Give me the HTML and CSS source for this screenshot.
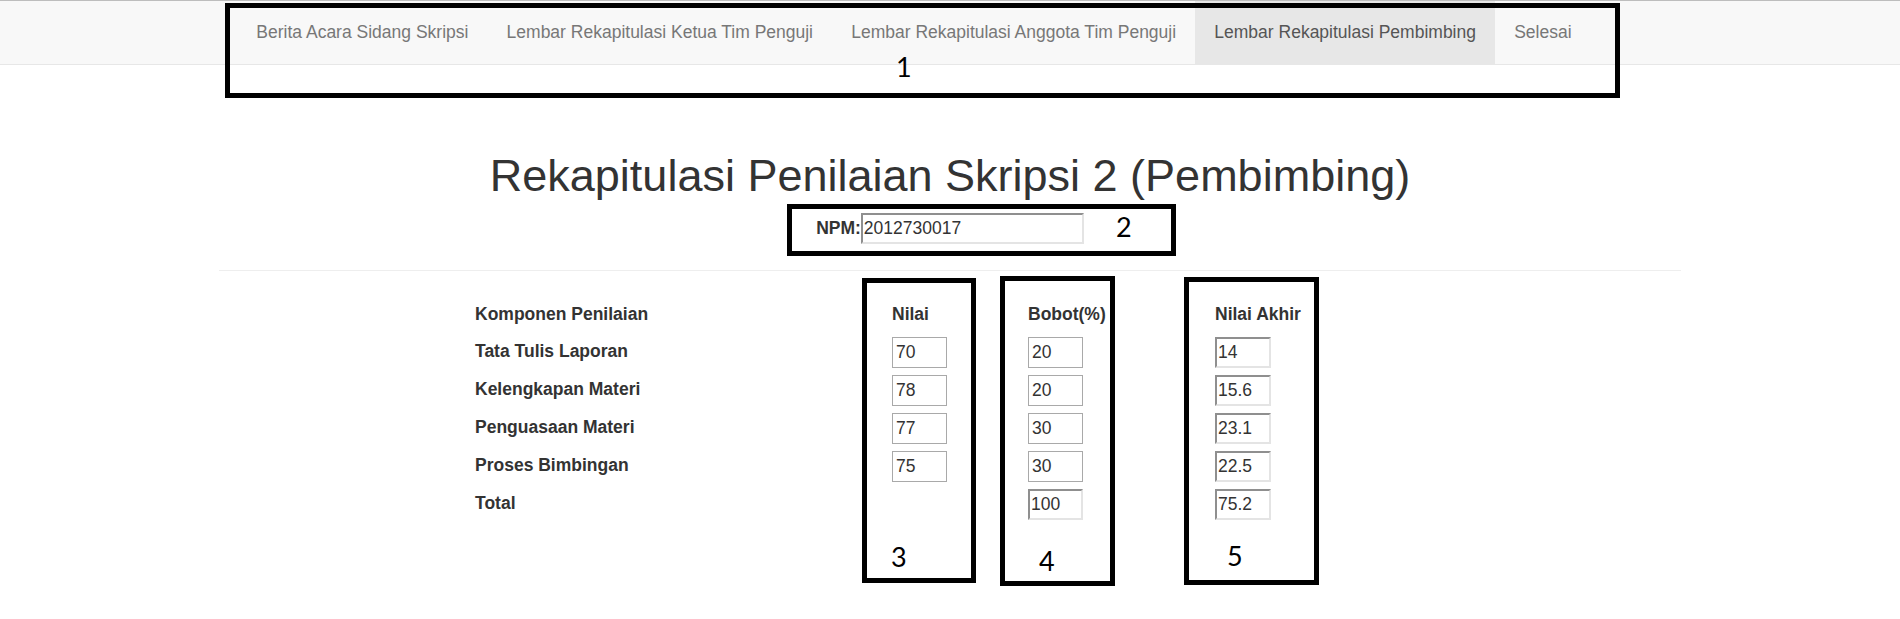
FILE: index.html
```html
<!DOCTYPE html>
<html lang="id">
<head>
<meta charset="utf-8">
<title>Rekapitulasi Penilaian Skripsi 2 (Pembimbing)</title>
<link rel="stylesheet" href="styles.css">
</head>
<body>
<nav class="navbar">
  <ul class="nav">
    <li><a href="#">Berita Acara Sidang Skripsi</a></li>
    <li><a href="#">Lembar Rekapitulasi Ketua Tim Penguji</a></li>
    <li><a href="#">Lembar Rekapitulasi Anggota Tim Penguji</a></li>
    <li class="active"><a href="#">Lembar Rekapitulasi Pembimbing</a></li>
    <li><a href="#">Selesai</a></li>
  </ul>
</nav>

<main class="content">
  <h1 class="title">Rekapitulasi Penilaian Skripsi 2 (Pembimbing)</h1>
  <div class="npm-row">
    <label class="npm-label" for="npm">NPM:</label><input id="npm" class="field field-inset field-npm" type="text" value="2012730017">
  </div>
  <hr class="divider">

  <div class="score-table">
    <div class="cell head">Komponen Penilaian</div>
    <div class="cell head">Nilai</div>
    <div class="cell head">Bobot(%)</div>
    <div class="cell head">Nilai Akhir</div>

    <div class="cell label">Tata Tulis Laporan</div>
    <div class="cell"><input class="field field-plain" type="text" value="70"></div>
    <div class="cell"><input class="field field-plain" type="text" value="20"></div>
    <div class="cell"><input class="field field-inset field-akhir" type="text" value="14"></div>

    <div class="cell label">Kelengkapan Materi</div>
    <div class="cell"><input class="field field-plain" type="text" value="78"></div>
    <div class="cell"><input class="field field-plain" type="text" value="20"></div>
    <div class="cell"><input class="field field-inset field-akhir" type="text" value="15.6"></div>

    <div class="cell label">Penguasaan Materi</div>
    <div class="cell"><input class="field field-plain" type="text" value="77"></div>
    <div class="cell"><input class="field field-plain" type="text" value="30"></div>
    <div class="cell"><input class="field field-inset field-akhir" type="text" value="23.1"></div>

    <div class="cell label">Proses Bimbingan</div>
    <div class="cell"><input class="field field-plain" type="text" value="75"></div>
    <div class="cell"><input class="field field-plain" type="text" value="30"></div>
    <div class="cell"><input class="field field-inset field-akhir" type="text" value="22.5"></div>

    <div class="cell label">Total</div>
    <div class="cell"></div>
    <div class="cell"><input class="field field-inset field-total" type="text" value="100"></div>
    <div class="cell"><input class="field field-inset field-akhir" type="text" value="75.2"></div>
  </div>
</main>

<div class="annotations" aria-hidden="true">
  <div class="mark mark-1"></div>
  <span class="num num-1">1</span>
  <div class="mark mark-2"></div>
  <span class="num num-2">2</span>
  <div class="mark mark-3"></div>
  <span class="num num-3">3</span>
  <div class="mark mark-4"></div>
  <span class="num num-4">4</span>
  <div class="mark mark-5"></div>
  <span class="num num-5">5</span>
</div>
</body>
</html>
```

FILE: styles.css
```css
* { box-sizing: border-box; }

html, body {
  margin: 0;
  padding: 0;
  background: #fff;
}

body {
  font-family: "Liberation Sans", Arial, sans-serif;
  font-size: 17.5px;
  line-height: 25px;
  color: #333;
  width: 1900px;
  height: 619px;
  overflow: hidden;
  position: relative;
}

/* ---------- navbar ---------- */
.navbar {
  background: #f8f8f8;
  border-top: 1px solid #bdbdbd;
  border-bottom: 1px solid #e7e7e7;
}

.nav {
  list-style: none;
  margin: 0 auto;
  padding: 0 18.5px;
  width: 1462.5px;
  display: flex;
}

.nav a {
  display: block;
  padding: 18.75px 19.1px;
  line-height: 25px;
  color: #777;
  text-decoration: none;
}

.nav .active a {
  background: #e7e7e7;
  color: #555;
}

/* ---------- content ---------- */
.title {
  margin: 86px 0 12.5px;
  font-size: 45px;
  line-height: 1.1;
  font-weight: normal;
  text-align: center;
  color: #333;
}

.npm-row {
  display: flex;
  justify-content: center;
  align-items: center;
  height: 31px;
}

.npm-label {
  font-weight: bold;
}

.divider {
  width: 1462.5px;
  margin: 26px auto 25px;
  border: 0;
  border-top: 1px solid #eee;
}

.field {
  font-family: "Liberation Sans", Arial, sans-serif;
  font-size: 17.5px;
  color: #333;
  background: #fff;
  height: 31px;
  margin: 0;
  outline: none;
}

.field-plain {
  width: 55px;
  border: 1px solid #a9a9a9;
  padding: 0 3px;
}

.field-inset {
  border-style: solid;
  border-width: 2px;
  border-color: #8f8f8f #e4e4e4 #e4e4e4 #8f8f8f;
  padding: 0 1px;
}

.field-npm { width: 223px; }
.field-akhir { width: 56px; }
.field-total { width: 55px; }

/* ---------- score table ---------- */
.score-table {
  width: 950px;
  margin: 0 auto;
  display: grid;
  grid-template-columns: 417px 136px 187px 210px;
  grid-auto-rows: 38px;
  align-items: center;
}

.cell {
  line-height: 25px;
}

.head,
.label {
  font-weight: bold;
}

.label {
  padding-bottom: 2px;
}

/* ---------- annotation overlay ---------- */
.annotations {
  position: absolute;
  left: 0;
  top: 0;
  width: 1900px;
  height: 619px;
  pointer-events: none;
}

.mark {
  position: absolute;
  border: 5px solid #000;
}

.mark-1 { left: 225px; top: 3px; width: 1395px; height: 95px; }
.mark-2 { left: 787px; top: 204px; width: 389px; height: 52px; }
.mark-3 { left: 862px; top: 278px; width: 114px; height: 305px; }
.mark-4 { left: 1000px; top: 276px; width: 115px; height: 310px; }
.mark-5 { left: 1184px; top: 277px; width: 135px; height: 308px; }

.num {
  position: absolute;
  font-family: Lato, "Open Sans", sans-serif;
  font-size: 27px;
  line-height: 1;
  color: #000;
}

.num-1 { left: 896px; top: 53px; }
.num-2 { left: 1116px; top: 213px; }
.num-3 { left: 891px; top: 543px; }
.num-4 { left: 1039px; top: 547px; }
.num-5 { left: 1227px; top: 542px; }
```
